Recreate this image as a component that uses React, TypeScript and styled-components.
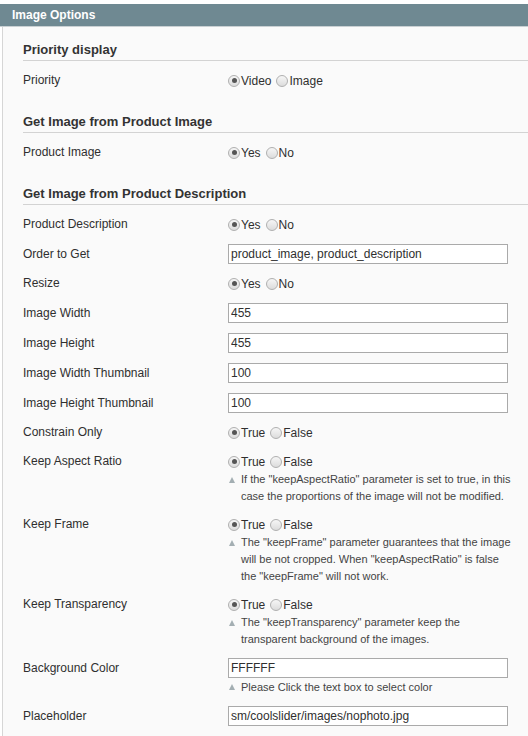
import React from 'react';
import { styled, createGlobalStyle } from 'styled-components';

type RadioField = {
	kind: 'radio';
	label: string;
	options: string[];
	notes?: string[];
};

type TextField = {
	kind: 'text';
	label: string;
	value: string;
	notes?: string[];
};

type Field = RadioField | TextField;

type Group = {
	title: string;
	fields: Field[];
};

const yesNo = ['Yes', 'No'];
const trueFalse = ['True', 'False'];

const groups: Group[] = [
	{
		title: 'Priority display',
		fields: [{ kind: 'radio', label: 'Priority', options: ['Video', 'Image'] }],
	},
	{
		title: 'Get Image from Product Image',
		fields: [{ kind: 'radio', label: 'Product Image', options: yesNo }],
	},
	{
		title: 'Get Image from Product Description',
		fields: [
			{ kind: 'radio', label: 'Product Description', options: yesNo },
			{ kind: 'text', label: 'Order to Get', value: 'product_image, product_description' },
			{ kind: 'radio', label: 'Resize', options: yesNo },
			{ kind: 'text', label: 'Image Width', value: '455' },
			{ kind: 'text', label: 'Image Height', value: '455' },
			{ kind: 'text', label: 'Image Width Thumbnail', value: '100' },
			{ kind: 'text', label: 'Image Height Thumbnail', value: '100' },
			{ kind: 'radio', label: 'Constrain Only', options: trueFalse },
			{
				kind: 'radio',
				label: 'Keep Aspect Ratio',
				options: trueFalse,
				notes: [
					'If the "keepAspectRatio" parameter is set to true, in this',
					'case the proportions of the image will not be modified.',
				],
			},
			{
				kind: 'radio',
				label: 'Keep Frame',
				options: trueFalse,
				notes: [
					'The "keepFrame" parameter guarantees that the image',
					'will be not cropped. When "keepAspectRatio" is false',
					'the "keepFrame" will not work.',
				],
			},
			{
				kind: 'radio',
				label: 'Keep Transparency',
				options: trueFalse,
				notes: [
					'The "keepTransparency" parameter keep the',
					'transparent background of the images.',
				],
			},
			{
				kind: 'text',
				label: 'Background Color',
				value: 'FFFFFF',
				notes: ['Please Click the text box to select color'],
			},
			{ kind: 'text', label: 'Placeholder', value: 'sm/coolslider/images/nophoto.jpg' },
		],
	},
];

const App = () => {
	return (
		<>
			<GlobalStyle />
			<Panel>
				{/* header */}
				<PanelHead>
					<PanelTitle>Image Options</PanelTitle>
				</PanelHead>

				{/* body */}
				<PanelBody>
					{groups.map((group) => (
						<Section key={group.title}>
							<Legend>{group.title}</Legend>

							{group.fields.map((field) => (
								<Row key={field.label}>
									<Label $tall={field.kind === 'text'}>{field.label}</Label>

									<Value>
										{field.kind === 'radio' ? (
											<RadioLine>
												{field.options.map((opt, i) => (
													<Option key={opt}>
														<RadioDot $checked={i === 0} />
														{opt}
													</Option>
												))}
											</RadioLine>
										) : (
											<TextInput defaultValue={field.value} />
										)}

										{field.notes && (
											<Note $tall={field.kind === 'text'}>
												<NoteIcon />
												<NoteText>
													{field.notes.map((line) => (
														<NoteLine key={line}>{line}</NoteLine>
													))}
												</NoteText>
											</Note>
										)}
									</Value>
								</Row>
							))}
						</Section>
					))}
				</PanelBody>
			</Panel>
		</>
	);
};

const GlobalStyle = createGlobalStyle`
	html, body {
		margin: 0;
		padding: 0;
		overflow: hidden;
		background: #fff;
	}

	body {
		font-family: 'Liberation Sans', Arial, sans-serif;
		color: #2f2f2f;
	}
`;

const Panel = styled.div`
	width: 100%;
	padding-top: 4px;
`;

const PanelHead = styled.div`
	height: 22px;
	background: #6f8992;
	border-bottom: 1px solid #c9d0d3;
	padding-left: 12px;
`;

const PanelTitle = styled.h4`
	margin: 0;
	font-size: 12px;
	line-height: 22px;
	font-weight: 700;
	color: #fff;
`;

const PanelBody = styled.div`
	box-sizing: border-box;
	margin-left: 2px;
	border-left: 1px solid #d6d6d6;
	background: #fafafa;
	padding: 15px 0 0 20px;
	min-height: calc(100vh - 27px);
`;

const Section = styled.div`
	margin-bottom: 19px;

	&:last-child {
		margin-bottom: 0;
	}
`;

const Legend = styled.h4`
	margin: 0 0 5px;
	padding-bottom: 2px;
	font-size: 13px;
	line-height: 16px;
	font-weight: 700;
	color: #333;
	border-bottom: 1px solid #d3d3d3;
`;

const Row = styled.div`
	display: grid;
	grid-template-columns: 205px 280px;
	align-items: start;
	padding: 5px 0;
`;

const Label = styled.div<{ $tall: boolean }>`
	font-size: 12px;
	line-height: ${({ $tall }) => ($tall ? '20px' : '19px')};
	color: #2f2f2f;
`;

const Value = styled.div`
	display: flex;
	flex-direction: column;
`;

const RadioLine = styled.div`
	display: flex;
	align-items: center;
	height: 19px;
	font-size: 12px;
	color: #2f2f2f;
`;

const Option = styled.span`
	display: inline-flex;
	align-items: center;
	margin-right: 5px;
`;

const RadioDot = styled.span<{ $checked: boolean }>`
	position: relative;
	box-sizing: border-box;
	width: 12px;
	height: 12px;
	margin-right: 1px;
	border-radius: 50%;
	border: 1px solid #b0b0b0;
	background: linear-gradient(#f6f6f6, #dcdcdc);

	&::after {
		content: '';
		display: ${({ $checked }) => ($checked ? 'block' : 'none')};
		position: absolute;
		left: 2.5px;
		top: 2.5px;
		width: 5px;
		height: 5px;
		border-radius: 50%;
		background: #555;
	}
`;

const TextInput = styled.input`
	box-sizing: border-box;
	width: 280px;
	height: 20px;
	margin: 0;
	padding: 0 2px;
	border: 1px solid #aaa;
	background: #fff;
	font-family: 'Liberation Sans', Arial, sans-serif;
	font-size: 12px;
	color: #2f2f2f;
	outline: none;
`;

const Note = styled.div<{ $tall: boolean }>`
	display: flex;
	align-items: flex-start;
	font-size: 11px;
	line-height: ${({ $tall }) => ($tall ? '18px' : '17px')};
	color: #444;
`;

const NoteIcon = styled.span`
	flex: none;
	width: 0;
	height: 0;
	margin: 6px 6px 0 1px;
	border-left: 3.5px solid transparent;
	border-right: 3.5px solid transparent;
	border-bottom: 6px solid #a3aeb2;
`;

const NoteText = styled.div`
	flex: 1;
`;

const NoteLine = styled.div`
	white-space: nowrap;
`;

export default App;
